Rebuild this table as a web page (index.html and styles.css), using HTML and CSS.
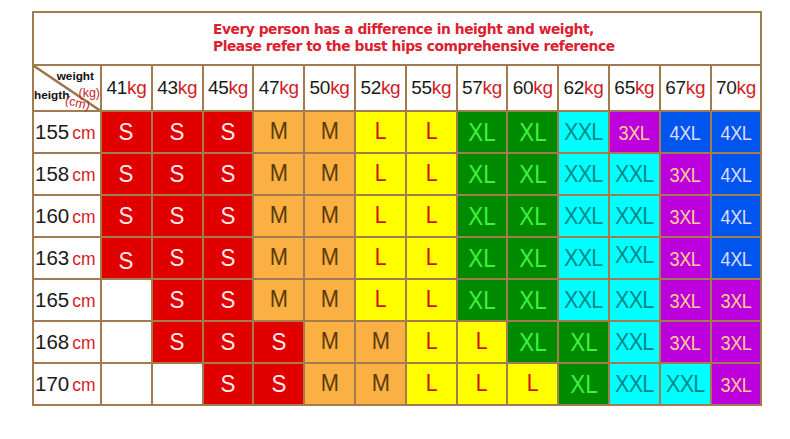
FILE: index.html
```html
<!DOCTYPE html>
<html>
<head>
<meta charset="utf-8">
<link rel="stylesheet" href="styles.css">
</head>
<body>
<table class="chart">
  <colgroup>
    <col class="c-first">
    <col span="13" class="c-w">
  </colgroup>
  <tr class="r-title">
    <td colspan="14" class="title">
      <p>Every person has a difference in height and weight,</p>
      <p>Please refer to the bust hips comprehensive reference</p>
    </td>
  </tr>
  <tr class="r-head">
    <td class="corner">
      <svg class="diag" viewBox="0 0 100 100" preserveAspectRatio="none"><line x1="0" y1="0" x2="100" y2="100" stroke="#9a7448" stroke-width="2.4" vector-effect="non-scaling-stroke"/></svg>
      <span class="lbl-w">weight</span>
      <span class="lbl-kg">(kg)</span>
      <span class="lbl-h">heigth</span>
      <span class="lbl-cm">(cm)</span>
    </td>
    <td class="wt">41<span>kg</span></td>
    <td class="wt">43<span>kg</span></td>
    <td class="wt">45<span>kg</span></td>
    <td class="wt">47<span>kg</span></td>
    <td class="wt">50<span>kg</span></td>
    <td class="wt">52<span>kg</span></td>
    <td class="wt">55<span>kg</span></td>
    <td class="wt">57<span>kg</span></td>
    <td class="wt">60<span>kg</span></td>
    <td class="wt">62<span>kg</span></td>
    <td class="wt">65<span>kg</span></td>
    <td class="wt">67<span>kg</span></td>
    <td class="wt">70<span>kg</span></td>
  </tr>
  <tr class="r-data">
    <td class="ht">155<span>cm</span></td>
    <td class="s"><span>S</span></td><td class="s"><span>S</span></td><td class="s"><span>S</span></td>
    <td class="m"><span>M</span></td><td class="m"><span>M</span></td>
    <td class="l"><span>L</span></td><td class="l"><span>L</span></td>
    <td class="xl"><span>XL</span></td><td class="xl"><span>XL</span></td>
    <td class="xxl"><span>XXL</span></td>
    <td class="x3"><span>3XL</span></td>
    <td class="x4"><span>4XL</span></td><td class="x4"><span>4XL</span></td>
  </tr>
  <tr class="r-data">
    <td class="ht">158<span>cm</span></td>
    <td class="s"><span>S</span></td><td class="s"><span>S</span></td><td class="s"><span>S</span></td>
    <td class="m"><span>M</span></td><td class="m"><span>M</span></td>
    <td class="l"><span>L</span></td><td class="l"><span>L</span></td>
    <td class="xl"><span>XL</span></td><td class="xl"><span>XL</span></td>
    <td class="xxl"><span>XXL</span></td><td class="xxl"><span>XXL</span></td>
    <td class="x3"><span>3XL</span></td>
    <td class="x4"><span>4XL</span></td>
  </tr>
  <tr class="r-data">
    <td class="ht">160<span>cm</span></td>
    <td class="s"><span>S</span></td><td class="s"><span>S</span></td><td class="s"><span>S</span></td>
    <td class="m"><span>M</span></td><td class="m"><span>M</span></td>
    <td class="l"><span>L</span></td><td class="l"><span>L</span></td>
    <td class="xl"><span>XL</span></td><td class="xl"><span>XL</span></td>
    <td class="xxl"><span>XXL</span></td><td class="xxl"><span>XXL</span></td>
    <td class="x3"><span>3XL</span></td>
    <td class="x4"><span>4XL</span></td>
  </tr>
  <tr class="r-data">
    <td class="ht">163<span>cm</span></td>
    <td class="s low"><span>S</span></td><td class="s"><span>S</span></td><td class="s"><span>S</span></td>
    <td class="m"><span>M</span></td><td class="m"><span>M</span></td>
    <td class="l"><span>L</span></td><td class="l"><span>L</span></td>
    <td class="xl"><span>XL</span></td><td class="xl"><span>XL</span></td>
    <td class="xxl"><span>XXL</span></td><td class="xxl high"><span>XXL</span></td>
    <td class="x3"><span>3XL</span></td>
    <td class="x4"><span>4XL</span></td>
  </tr>
  <tr class="r-data">
    <td class="ht">165<span>cm</span></td>
    <td class="empty"></td>
    <td class="s"><span>S</span></td><td class="s"><span>S</span></td>
    <td class="m"><span>M</span></td><td class="m"><span>M</span></td>
    <td class="l"><span>L</span></td><td class="l"><span>L</span></td>
    <td class="xl"><span>XL</span></td><td class="xl"><span>XL</span></td>
    <td class="xxl"><span>XXL</span></td><td class="xxl"><span>XXL</span></td>
    <td class="x3"><span>3XL</span></td><td class="x3"><span>3XL</span></td>
  </tr>
  <tr class="r-data">
    <td class="ht">168<span>cm</span></td>
    <td class="empty"></td>
    <td class="s"><span>S</span></td><td class="s"><span>S</span></td><td class="s"><span>S</span></td>
    <td class="m"><span>M</span></td><td class="m"><span>M</span></td>
    <td class="l"><span>L</span></td><td class="l"><span>L</span></td>
    <td class="xl"><span>XL</span></td><td class="xl"><span>XL</span></td>
    <td class="xxl"><span>XXL</span></td>
    <td class="x3"><span>3XL</span></td><td class="x3"><span>3XL</span></td>
  </tr>
  <tr class="r-data">
    <td class="ht">170<span>cm</span></td>
    <td class="empty"></td><td class="empty"></td>
    <td class="s"><span>S</span></td><td class="s"><span>S</span></td>
    <td class="m"><span>M</span></td><td class="m"><span>M</span></td>
    <td class="l"><span>L</span></td><td class="l"><span>L</span></td><td class="l"><span>L</span></td>
    <td class="xl"><span>XL</span></td>
    <td class="xxl"><span>XXL</span></td><td class="xxl"><span>XXL</span></td>
    <td class="x3"><span>3XL</span></td>
  </tr>
</table>
</body>
</html>
```

FILE: styles.css
```css
html, body {
  margin: 0;
  padding: 0;
  background: #ffffff;
}

body {
  padding: 11px 0 0 32px;
  font-family: "Liberation Sans", Arial, sans-serif;
}

.chart {
  border-collapse: collapse;
  table-layout: fixed;
  width: 729px;
  border: 2px solid #a27c4e;
}

.c-first { width: 68px; }
.c-w { width: 50.8px; }

.chart td {
  border: 2px solid #a27c4e;
  padding: 0;
  text-align: center;
  vertical-align: middle;
  overflow: hidden;
}

.r-title { height: 52.5px; }
.r-head { height: 46.5px; }
.r-data { height: 42px; }

.title {
  text-align: left !important;
  padding-left: 179px !important;
  color: #dc2030;
  font-family: "DejaVu Sans", Verdana, sans-serif;
  font-weight: bold;
  font-size: 13.8px;
  letter-spacing: -0.45px;
}

.title p {
  margin: 0;
  line-height: 17px;
}

.chart td.corner {
  position: relative;
  overflow: visible;
  font-family: "Liberation Sans", Arial, sans-serif;
}

.diag {
  position: absolute;
  left: 0;
  top: 0;
  width: 100%;
  height: 100%;
}

.lbl-w, .lbl-kg, .lbl-h, .lbl-cm {
  position: absolute;
  line-height: 1;
  white-space: nowrap;
}

.lbl-w {
  right: 6px;
  top: 5px;
  font-weight: bold;
  font-size: 11.8px;
  color: #111;
}

.lbl-kg {
  right: 0;
  top: 21px;
  font-size: 12.5px;
  color: #c8262e;
}

.lbl-h {
  left: 0;
  top: 24px;
  font-weight: bold;
  font-size: 11.8px;
  color: #111;
}

.lbl-cm {
  left: 31px;
  top: 31px;
  font-size: 12.5px;
  color: #c8262e;
  transform: rotate(14deg);
}

.wt {
  font-size: 19px;
  color: #1a1a1a;
  letter-spacing: -0.3px;
  white-space: nowrap;
}

.wt span, .ht span {
  color: #d41c26;
}

.ht {
  font-size: 20.5px;
  color: #1a1a1a;
  text-align: left !important;
  padding-left: 1px !important;
  white-space: nowrap;
}

.ht span {
  font-size: 17.5px;
  margin-left: 3px;
}

.s, .m, .l, .xl, .xxl, .x3, .x4 {
  white-space: nowrap;
  line-height: 1;
}

.s span, .m span, .l span, .xl span, .xxl span, .x3 span, .x4 span {
  display: inline-block;
}

.s { background: #e00000; color: #ffeaea; font-size: 24px; }
.s span { transform: scaleX(0.93); }

.m { background: #fbb044; color: #5a3a0a; font-size: 23.5px; }
.m span { transform: scaleX(0.93); }

.l { background: #ffff00; color: #d01010; font-size: 23.5px; }
.l span { transform: scaleX(0.9); }

.xl { background: #008a00; color: #3cf23c; font-size: 26px; }
.xl span { transform: scaleX(0.86); }

.xxl { background: #00ffff; color: #008888; font-size: 24px; letter-spacing: -1px; }
.xxl span { transform: scaleX(0.9); }

.x3 { background: #bb00dd; color: #ffd08a; font-size: 21px; letter-spacing: -0.5px; }
.x3 span { transform: scaleX(0.86); }

.x4 { background: #0055ee; color: #dcdcff; font-size: 21px; letter-spacing: -0.5px; }
.x4 span { transform: scaleX(0.86); }

.empty { background: #ffffff; }

.low { padding-top: 6px !important; }
.high { padding-bottom: 6px !important; }
```
